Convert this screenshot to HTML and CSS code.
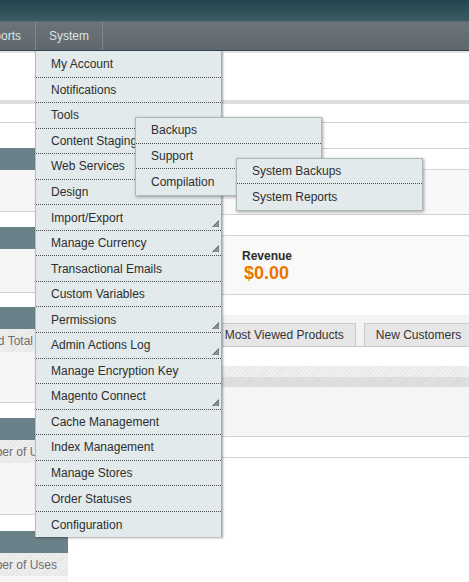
FILE: index.html
```html
<!DOCTYPE html>
<html>
<head>
<meta charset="utf-8">
<title>Dashboard</title>
<link rel="stylesheet" href="styles.css">
</head>
<body>
<div class="header"></div>
<nav class="nav">
  <div class="nav-item nav-clip">Reports</div>
  <div class="nav-item nav-system">System
    <ul class="menu">
      <li class="mi">My Account</li>
      <li class="mi">Notifications</li>
      <li class="mi">Tools
        <span class="arr"><svg width="7" height="7" viewBox="0 0 7 7"><path d="M7 0V7H0Z" fill="#55606a"/><path d="M2.3 7L7 2.3M4.6 7L7 4.6" stroke="#e2eaec" stroke-width="0.8"/></svg></span>
        <ul class="sub">
          <li class="mi">Backups</li>
          <li class="mi">Support
            <ul class="sub">
              <li class="mi">System Backups</li>
              <li class="mi">System Reports</li>
            </ul>
          </li>
          <li class="mi">Compilation</li>
        </ul>
      </li>
      <li class="mi">Content Staging</li>
      <li class="mi">Web Services</li>
      <li class="mi">Design</li>
      <li class="mi">Import/Export
        <span class="arr"><svg width="7" height="7" viewBox="0 0 7 7"><path d="M7 0V7H0Z" fill="#55606a"/><path d="M2.3 7L7 2.3M4.6 7L7 4.6" stroke="#e2eaec" stroke-width="0.8"/></svg></span>
      </li>
      <li class="mi">Manage Currency
        <span class="arr"><svg width="7" height="7" viewBox="0 0 7 7"><path d="M7 0V7H0Z" fill="#55606a"/><path d="M2.3 7L7 2.3M4.6 7L7 4.6" stroke="#e2eaec" stroke-width="0.8"/></svg></span>
      </li>
      <li class="mi">Transactional Emails</li>
      <li class="mi">Custom Variables</li>
      <li class="mi">Permissions
        <span class="arr"><svg width="7" height="7" viewBox="0 0 7 7"><path d="M7 0V7H0Z" fill="#55606a"/><path d="M2.3 7L7 2.3M4.6 7L7 4.6" stroke="#e2eaec" stroke-width="0.8"/></svg></span>
      </li>
      <li class="mi">Admin Actions Log
        <span class="arr"><svg width="7" height="7" viewBox="0 0 7 7"><path d="M7 0V7H0Z" fill="#55606a"/><path d="M2.3 7L7 2.3M4.6 7L7 4.6" stroke="#e2eaec" stroke-width="0.8"/></svg></span>
      </li>
      <li class="mi">Manage Encryption Key</li>
      <li class="mi">Magento Connect
        <span class="arr"><svg width="7" height="7" viewBox="0 0 7 7"><path d="M7 0V7H0Z" fill="#55606a"/><path d="M2.3 7L7 2.3M4.6 7L7 4.6" stroke="#e2eaec" stroke-width="0.8"/></svg></span>
      </li>
      <li class="mi">Cache Management</li>
      <li class="mi">Index Management</li>
      <li class="mi">Manage Stores</li>
      <li class="mi">Order Statuses</li>
      <li class="mi">Configuration</li>
    </ul>
  </div>
</nav>
<div class="nav-under"></div>
<div class="top-space"></div>
<div class="band"></div>
<div class="cols">
  <aside class="side">
    <div class="side-top"></div>
    <section class="widget w1">
      <div class="w-head"></div>
      <div class="w-body"></div>
    </section>
    <section class="widget w2">
      <div class="w-head"></div>
      <div class="w-body"></div>
    </section>
    <section class="widget w3">
      <div class="w-head"></div>
      <div class="colhead ch-total">Grand Total</div>
      <div class="w-body"></div>
    </section>
    <section class="widget w4">
      <div class="w-head"></div>
      <div class="colhead ch-uses">Number of Uses</div>
      <div class="w-body"></div>
    </section>
    <section class="widget w5">
      <div class="w-head"></div>
      <div class="colhead ch-uses ch-last">Number of Uses</div>
      <div class="w-body"></div>
    </section>
  </aside>
  <main class="main">
    <div class="m-r1"></div>
    <div class="m-r2"></div>
    <div class="m-r3"></div>
    <div class="m-r4"></div>
    <div class="m-r5"></div>
    <div class="totals">
      <div class="stat">
        <div class="stat-label">Revenue</div>
        <div class="stat-value">$0.00</div>
      </div>
    </div>
    <div class="gap-a"></div>
    <div class="tabs">
      <div class="tab active">Bestsellers</div>
      <div class="tab">Most Viewed Products</div>
      <div class="tab">New Customers</div>
      <div class="tab">Customers</div>
    </div>
    <div class="gap-b"></div>
    <div class="gh1"></div>
    <div class="gh2"></div>
    <div class="g-body"></div>
    <div class="m-r6"></div>
  </main>
</div>
</body>
</html>
```

FILE: styles.css
```css
* { box-sizing: border-box; }
html, body { margin: 0; padding: 0; }
body {
  font-family: "Liberation Sans", Arial, Helvetica, sans-serif;
  font-size: 12px;
  color: #2e2e2e;
  background: #fff;
  width: 469px;
  height: 582px;
  overflow: hidden;
}
ul { list-style: none; margin: 0; padding: 0; }

/* header + nav */
.header {
  height: 22px;
  background: linear-gradient(#244650, #3a5b61);
  border-bottom: 1px solid #587378;
}
.nav {
  height: 29px;
  display: flex;
  background: linear-gradient(#6c7479, #60686d);
  border-bottom: 1px solid #2c4851;
}
.nav-item {
  display: flex;
  align-items: center;
  color: #dde4e7;
  white-space: nowrap;
  border-right: 1px solid #80888c;
}
.nav-clip {
  width: 36px;
  flex-shrink: 0;
  justify-content: flex-end;
  padding-right: 14px;
  overflow: hidden;
}
.nav-system {
  position: relative;
  padding: 0 13px;
}
.nav-under { height: 2px; background: #e3e3e3; }
.top-space { height: 47px; }
.band { height: 4px; background: #dedede; }

/* dropdown menu */
.menu {
  position: absolute;
  left: -1px;
  top: calc(100% + 1px);
  width: 187px;
  padding-top: 1px;
  background: #e2eaec;
  border-left: 1px solid #b3bcbf;
  border-right: 1px solid #a4adb0;
  box-shadow: 1px 1px 2px rgba(0, 0, 0, 0.35);
  z-index: 10;
  color: #2e2e2e;
}
.mi {
  position: relative;
  height: 25.55px;
  display: flex;
  align-items: center;
  padding-left: 15px;
  border-bottom: 1px dotted #4d4d4d;
  white-space: nowrap;
}
.mi:last-child { border-bottom: none; }
.arr {
  position: absolute;
  right: 2px;
  bottom: 3px;
  width: 7px;
  height: 7px;
  display: block;
  line-height: 0;
}
.sub {
  position: absolute;
  left: 99px;
  top: 14px;
  width: 187px;
  background: #e2eaec;
  border: 1px solid #aeb7ba;
  box-shadow: 1px 1px 3px rgba(0, 0, 0, 0.35);
  z-index: 5;
}
.sub .sub { left: 100px; top: 14px; }

/* page columns */
.cols {
  display: grid;
  grid-template-columns: 68px 1fr;
  column-gap: 12px;
}

/* sidebar */
.side-top { height: 19px; border-bottom: 1px solid #d2d2d2; }
.widget { margin-top: 15px; }
.w1 { margin-top: 25px; }
.w3 { margin-top: 14px; }
.w5 { margin-top: 16px; }
.w-head { height: 22px; background: #6b8189; }
.w-body { background: #f6f6f6; border-bottom: 1px solid #d2d2d2; }
.w1 .w-body { height: 42px; }
.w2 .w-body { height: 44px; }
.w3 .w-body { height: 51px; }
.w4 .w-body { height: 52px; }
.w5 .w-body { height: 40px; border-bottom: none; }
.colhead {
  height: 23px;
  display: flex;
  align-items: center;
  justify-content: flex-end;
  white-space: nowrap;
  overflow: hidden;
  color: #6e6e6e;
  background: repeating-linear-gradient(135deg, #e4e4e4 0 1px, #eeeeee 1px 3px);
}
.ch-total { padding-right: 35px; }
.ch-uses { padding-right: 11px; }
.ch-last { padding-top: 1px; }

/* main column */
.main { min-width: 0; overflow: hidden; }
.m-r1 { height: 19px; border-bottom: 1px solid #d2d2d2; }
.m-r2 { height: 26px; border-bottom: 1px solid #d2d2d2; }
.m-r3 { height: 21px; border-bottom: 1px solid #d6d6d6; }
.m-r4 { height: 45px; background: #f8f8f8; border-bottom: 1px solid #d2d2d2; }
.m-r5 { height: 20px; }
.totals {
  display: flex;
  border-top: 1px solid #d2d2d2;
  border-bottom: 1px solid #d2d2d2;
  background: #f9f9f9;
  padding: 13px 0 11px 162px;
}
.stat-label {
  font-weight: bold;
  line-height: 15px;
  color: #2b2b2b;
}
.stat-value {
  font-weight: bold;
  font-size: 18px;
  line-height: 20px;
  margin-top: -1px;
  color: #ec7400;
  padding-left: 2px;
}
.gap-a { height: 20px; }
.tabs {
  display: flex;
  gap: 8px;
  padding: 8px 0 0 42px;
  background: #f3f3f3;
  border-bottom: 1px solid #cbcbcb;
}
.tab {
  flex-shrink: 0;
  height: 23px;
  display: flex;
  align-items: center;
  padding: 0 11px;
  white-space: nowrap;
  color: #333;
  background: #e6e6e6;
  border: 1px solid #c9c9c9;
  border-bottom: none;
}
.tab.active { background: #fff; }
.gap-b { height: 19px; }
.gh1 {
  height: 11px;
  background: repeating-linear-gradient(135deg, #e6e6e6 0 1px, #f0f0f0 1px 3px);
}
.gh2 {
  height: 10px;
  background: repeating-linear-gradient(135deg, #d8d8d8 0 1px, #e0e0e0 1px 3px);
}
.g-body { height: 50px; background: #f5f5f5; border-bottom: 1px solid #d2d2d2; }
.m-r6 { height: 21px; border-bottom: 1px solid #d2d2d2; }
```
